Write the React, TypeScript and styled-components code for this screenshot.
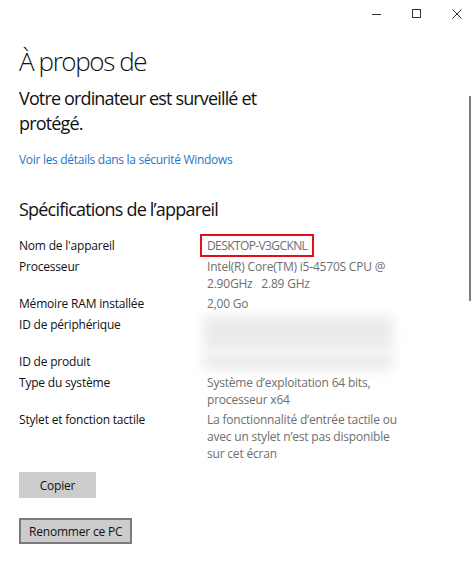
import React from "react";
import styled, { createGlobalStyle } from "styled-components";

const GlobalStyle = createGlobalStyle`
  html, body {
    margin: 0;
    padding: 0;
    background: #ffffff;
  }
  body {
    font-family: "Open Sans", "Noto Sans", sans-serif;
    color: #000;
  }
`;

type Spec = {
  label: string;
  value?: string[];
  blurred?: number;
  highlight?: boolean;
};

const specs: Spec[] = [
  { label: "Nom de l'appareil", value: ["DESKTOP-V3GCKNL"], highlight: true },
  { label: "Processeur", value: ["Intel(R) Core(TM) i5-4570S CPU @", "2.90GHz   2.89 GHz"] },
  { label: "Mémoire RAM installée", value: ["2,00 Go"] },
  { label: "ID de périphérique", blurred: 2 },
  { label: "ID de produit", blurred: 1 },
  { label: "Type du système", value: ["Système d’exploitation 64 bits,", "processeur x64"] },
  {
    label: "Stylet et fonction tactile",
    value: [
      "La fonctionnalité d’entrée tactile ou",
      "avec un stylet n’est pas disponible",
      "sur cet écran",
    ],
  },
];

const App: React.FC = () => {
  return (
    <Window>
      <GlobalStyle />
      <TitleBar>
        <CaptionButton aria-label="Réduire">
          <svg width="10" height="10" viewBox="0 0 10 10">
            <line x1="0" y1="5.5" x2="9" y2="5.5" stroke="#333" strokeWidth="1" />
          </svg>
        </CaptionButton>
        <CaptionButton aria-label="Agrandir">
          <svg width="10" height="10" viewBox="0 0 10 10">
            <rect x="0.5" y="0.5" width="8" height="8" fill="none" stroke="#333" strokeWidth="1" />
          </svg>
        </CaptionButton>
        <CaptionButton aria-label="Fermer">
          <svg width="10" height="10" viewBox="0 0 10 10">
            <path d="M0.5 0.5 L9.5 9.5 M9.5 0.5 L0.5 9.5" stroke="#333" strokeWidth="1" />
          </svg>
        </CaptionButton>
      </TitleBar>

      <Content>
        <PageTitle>À propos de</PageTitle>
        <Status>
          Votre ordinateur est surveillé et
          <br />
          protégé.
        </Status>
        <Link href="#">Voir les détails dans la sécurité Windows</Link>

        <SectionTitle>Spécifications de l’appareil</SectionTitle>
        <SpecGrid>
          {specs.map((s) => (
            <React.Fragment key={s.label}>
              <Label>{s.label}</Label>
              {s.blurred ? (
                <Value>
                  <Blur $lines={s.blurred} />
                </Value>
              ) : (
                <Value>
                  {s.highlight ? (
                    <Highlight>{s.value![0]}</Highlight>
                  ) : (
                    s.value!.map((line) => <Line key={line}>{line}</Line>)
                  )}
                </Value>
              )}
            </React.Fragment>
          ))}
        </SpecGrid>

        <Button>Copier</Button>
        <Button $outlined>Renommer ce PC</Button>
      </Content>

      <ScrollThumb />
    </Window>
  );
};

const Window = styled.div`
  position: relative;
  width: 474px;
  height: 561px;
  overflow: hidden;
  background: #fff;
`;

const TitleBar = styled.div`
  display: flex;
  justify-content: flex-end;
  align-items: center;
  gap: 30px;
  height: 28px;
  padding-right: 12px;
`;

const CaptionButton = styled.div`
  display: flex;
  width: 10px;
  height: 10px;
  align-items: center;
  justify-content: center;
`;

const Content = styled.div`
  padding-left: 19px;
  display: flex;
  flex-direction: column;
  align-items: flex-start;
`;

const PageTitle = styled.h1`
  margin: 15px 0 0;
  font-size: 26px;
  font-weight: 300;
  line-height: 36px;
  letter-spacing: -1.4px;
  color: #111;
`;

const Status = styled.div`
  margin-top: 7px;
  font-size: 18px;
  line-height: 25px;
  letter-spacing: -0.85px;
  color: #111;
`;

const Link = styled.a`
  margin-top: 15px;
  font-size: 12px;
  line-height: 17px;
  letter-spacing: -0.3px;
  color: #1f74c9;
  text-decoration: none;
`;

const SectionTitle = styled.h2`
  margin: 28px 0 0;
  font-size: 18px;
  font-weight: 400;
  line-height: 26px;
  letter-spacing: -0.8px;
  color: #111;
`;

const SpecGrid = styled.div`
  display: grid;
  grid-template-columns: 188px 240px;
  row-gap: 3.5px;
  margin-top: 15px;
  font-size: 12px;
  line-height: 17px;
  letter-spacing: -0.2px;
`;

const Label = styled.div`
  color: #111;
`;

const Value = styled.div`
  color: #6e6e6e;
`;

const Line = styled.div`
  white-space: pre;
`;

const Highlight = styled.div`
  display: inline-block;
  margin: -3px 0 -3px -7px;
  padding: 1px 5px 1px 5px;
  border: 2px solid #e3101b;
  letter-spacing: -0.6px;
`;

const Blur = styled.div<{ $lines: number }>`
  height: ${(p) => p.$lines * 17}px;
  width: 190px;
  margin-left: -4px;
  background: #ebebeb;
  filter: blur(6px);
`;

const Button = styled.button<{ $outlined?: boolean }>`
  margin-top: ${(p) => (p.$outlined ? "20px" : "10px")};
  height: 26px;
  padding: 0 ${(p) => (p.$outlined ? "8px" : "18px")};
  min-width: 77px;
  background: #cccccc;
  border: 2px solid ${(p) => (p.$outlined ? "#7a7a7a" : "#cccccc")};
  font-family: "Open Sans", "Noto Sans", sans-serif;
  font-size: 12px;
  letter-spacing: -0.2px;
  color: #111;
`;

const ScrollThumb = styled.div`
  position: absolute;
  right: 3px;
  top: 96px;
  width: 2px;
  height: 205px;
  background: #7d7d7d;
`;

export default App;
